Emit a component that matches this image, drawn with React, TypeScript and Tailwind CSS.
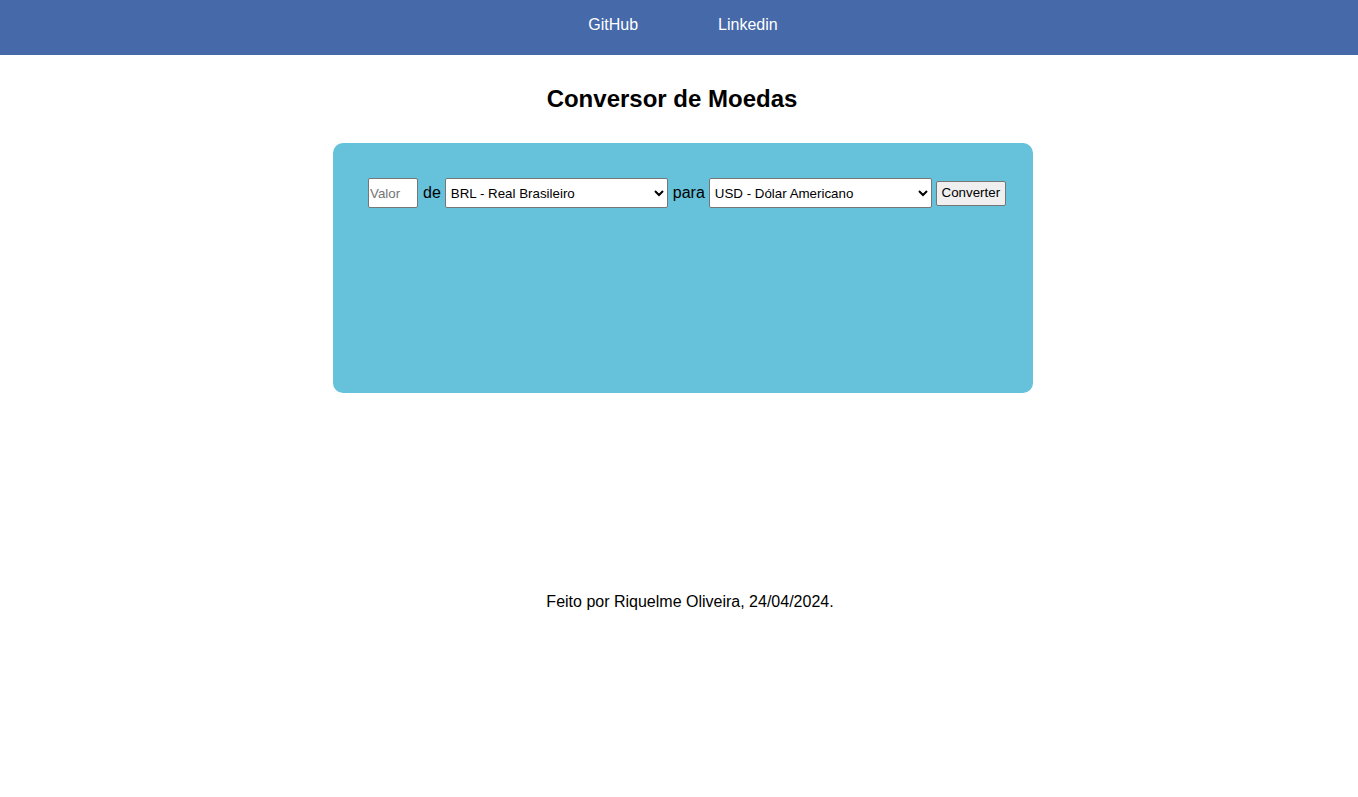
export default function App() {
  return (
    <div className="min-h-screen bg-white font-['Liberation_Sans',Arial,sans-serif] text-black">
      <nav className="flex h-[55px] items-center justify-center gap-[80px] bg-[#4669a9] pb-[6px] pl-[8px] text-[16px] text-white">
        <a href="#">GitHub</a>
        <a href="#">Linkedin</a>
      </nav>

      <h1 className="mt-[29px] pr-[14px] text-center text-[24px] font-bold leading-[30px]">
        Conversor de Moedas
      </h1>

      <div className="ml-[333px] mt-[29px] h-[250px] w-[700px] rounded-[10px] bg-[#66c1db] px-[35px] pt-[35px]">
        <div className="flex items-center text-[16px]">
          <input
            type="text"
            placeholder="Valor"
            className="h-[30px] w-[50px] shrink-0 rounded-[2px] border border-[#767676] bg-white px-[1px] text-[13.33px] placeholder:text-[#757575]"
          />
          <span className="ml-[5px] mr-[4px] shrink-0">de</span>
          <select className="h-[30px] w-[223px] shrink-0 rounded-[2px] border border-[#767676] bg-white pl-[1px] text-[13.33px]">
            <option>BRL - Real Brasileiro</option>
            <option>USD - Dólar Americano</option>
            <option>EUR - Euro</option>
          </select>
          <span className="ml-[5px] mr-[4px] shrink-0">para</span>
          <select className="h-[30px] w-[223px] shrink-0 rounded-[2px] border border-[#767676] bg-white pl-[1px] text-[13.33px]">
            <option>USD - Dólar Americano</option>
            <option>BRL - Real Brasileiro</option>
            <option>EUR - Euro</option>
          </select>
          <button className="ml-[4px] h-[25px] w-[70px] shrink-0 rounded-[2px] border border-[#767676] bg-[#efefef] text-[13.33px]">
            Converter
          </button>
        </div>
      </div>

      <p className="mt-[197px] pl-[22px] text-center text-[16px]">
        Feito por Riquelme Oliveira, 24/04/2024.
      </p>
    </div>
  );
}
